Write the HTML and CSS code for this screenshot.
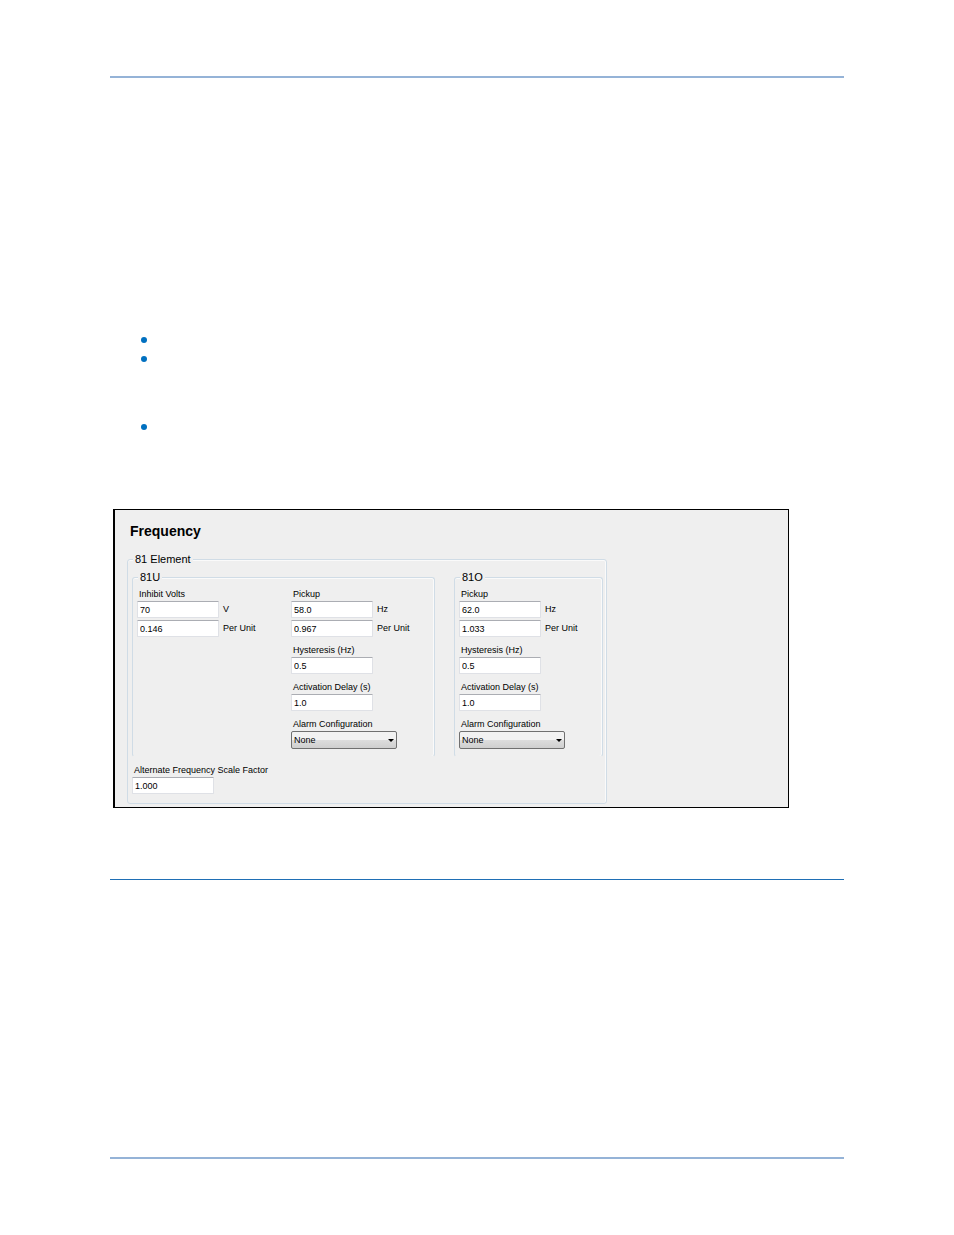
FILE: index.html
```html
<!DOCTYPE html>
<html lang="en">
<head>
<meta charset="utf-8">
<title>Frequency</title>
<link rel="stylesheet" href="styles.css">
</head>
<body>
<hr class="rule">
<main class="content">
  <ul class="bullets">
    <li></li>
    <li class="tall"></li>
    <li></li>
  </ul>
  <form class="panel">
    <h1 class="title">Frequency</h1>
    <fieldset class="group outer">
      <legend>81 Element</legend>
      <div class="elements">
        <fieldset class="group inner under">
          <legend>81U</legend>
          <div class="column">
            <div class="field">
              <label for="inhibit">Inhibit Volts</label>
              <div class="row"><input id="inhibit" type="text" value="70"><span>V</span></div>
              <div class="row"><input type="text" aria-label="Inhibit Volts per unit" value="0.146"><span>Per Unit</span></div>
            </div>
          </div>
          <div class="column">
            <div class="field">
              <label for="u-pickup">Pickup</label>
              <div class="row"><input id="u-pickup" type="text" value="58.0"><span>Hz</span></div>
              <div class="row"><input type="text" aria-label="81U pickup per unit" value="0.967"><span>Per Unit</span></div>
            </div>
            <div class="field">
              <label for="u-hyst">Hysteresis (Hz)</label>
              <input id="u-hyst" type="text" value="0.5">
            </div>
            <div class="field">
              <label for="u-delay">Activation Delay (s)</label>
              <input id="u-delay" type="text" value="1.0">
            </div>
            <div class="field">
              <label for="u-alarm">Alarm Configuration</label>
              <div class="select"><select id="u-alarm"><option>None</option></select></div>
            </div>
          </div>
        </fieldset>
        <fieldset class="group inner">
          <legend>81O</legend>
          <div class="column">
            <div class="field">
              <label for="o-pickup">Pickup</label>
              <div class="row"><input id="o-pickup" type="text" value="62.0"><span>Hz</span></div>
              <div class="row"><input type="text" aria-label="81O pickup per unit" value="1.033"><span>Per Unit</span></div>
            </div>
            <div class="field">
              <label for="o-hyst">Hysteresis (Hz)</label>
              <input id="o-hyst" type="text" value="0.5">
            </div>
            <div class="field">
              <label for="o-delay">Activation Delay (s)</label>
              <input id="o-delay" type="text" value="1.0">
            </div>
            <div class="field">
              <label for="o-alarm">Alarm Configuration</label>
              <div class="select"><select id="o-alarm"><option>None</option></select></div>
            </div>
          </div>
        </fieldset>
      </div>
      <div class="field scale">
        <label for="scale">Alternate Frequency Scale Factor</label>
        <input id="scale" type="text" value="1.000">
      </div>
    </fieldset>
  </form>
</main>
<hr class="rule thin">
<hr class="rule last">
</body>
</html>
```
FILE: styles.css
```css
* { box-sizing: border-box; }

body {
  margin: 0;
  padding: 76px 110px;
  background: #fff;
  color: #000;
  font: 9px/13px "Liberation Sans", Arial, sans-serif;
}

.rule {
  height: 2px;
  margin: 0;
  border: 0;
  background: #95b3d7;
}

.rule.thin {
  height: 1px;
  margin-top: 71px;
  background: #1f6fb5;
}

.rule.last { margin-top: 277px; }

.content { padding: 252px 55px 0 3px; }

.bullets {
  margin: 0;
  padding: 0 0 0 28px;
  list-style: none;
}

.bullets li {
  height: 19px;
  padding-top: 7px;
}

.bullets li.tall { height: 68px; }

.bullets li::before {
  content: "";
  display: block;
  width: 6px;
  height: 6px;
  border-radius: 50%;
  background: #0070c0;
}

.panel {
  margin-top: 73px;
  padding: 13px 12px 3px;
  border: 1px solid #000;
  border-left-width: 2px;
  background: #efefef;
}

.title {
  margin: 0 0 12px 3px;
  font-size: 14px;
  line-height: 17px;
}

.group {
  min-width: 0;
  margin: 0;
  padding: 4px;
  border: 1px solid #d0dce6;
  border-radius: 3px;
  box-shadow: inset -1px 0 #fafafa, inset 0 1px #fafafa;
}

.group legend {
  margin-left: 1px;
  padding: 0 2px;
  background: #efefef;
  font-size: 11px;
  line-height: 14px;
}

.outer {
  width: max-content;
  padding: 4px 3px 9px 4px;
}

.elements {
  display: flex;
  gap: 19px;
}

.inner {
  width: 149px;
  padding-bottom: 7px;
  border-bottom-color: transparent;
}

.under {
  display: grid;
  grid-template-columns: 154px 1fr;
  width: 303px;
}

.column {
  display: flex;
  flex-direction: column;
  gap: 7px;
}

.field label {
  display: block;
  padding-left: 2px;
}

.row {
  display: flex;
  gap: 4px;
}

.row + .row { margin-top: 2px; }

input {
  display: block;
  width: 82px;
  height: 17px;
  margin: 0;
  padding: 0 2px;
  border: 1px solid #dfe1e6;
  border-top-color: #abadb3;
  border-radius: 1px;
  background: #fff;
  color: #000;
  font: inherit;
}

.row span { line-height: 16px; }

.select {
  position: relative;
  width: 106px;
}

.select::after {
  content: "";
  position: absolute;
  top: 8px;
  right: 3px;
  border: 3px solid transparent;
  border-top-color: #000;
  border-bottom: 0;
}

select {
  display: block;
  width: 100%;
  height: 18px;
  margin: 0;
  padding: 0 2px;
  border: 1px solid #707070;
  border-radius: 2px;
  background: linear-gradient(#f2f2f2 0 50%, #dddddd 50%, #cfcfcf);
  color: #000;
  font: inherit;
  appearance: none;
}

.scale { margin-top: 7px; }
```
